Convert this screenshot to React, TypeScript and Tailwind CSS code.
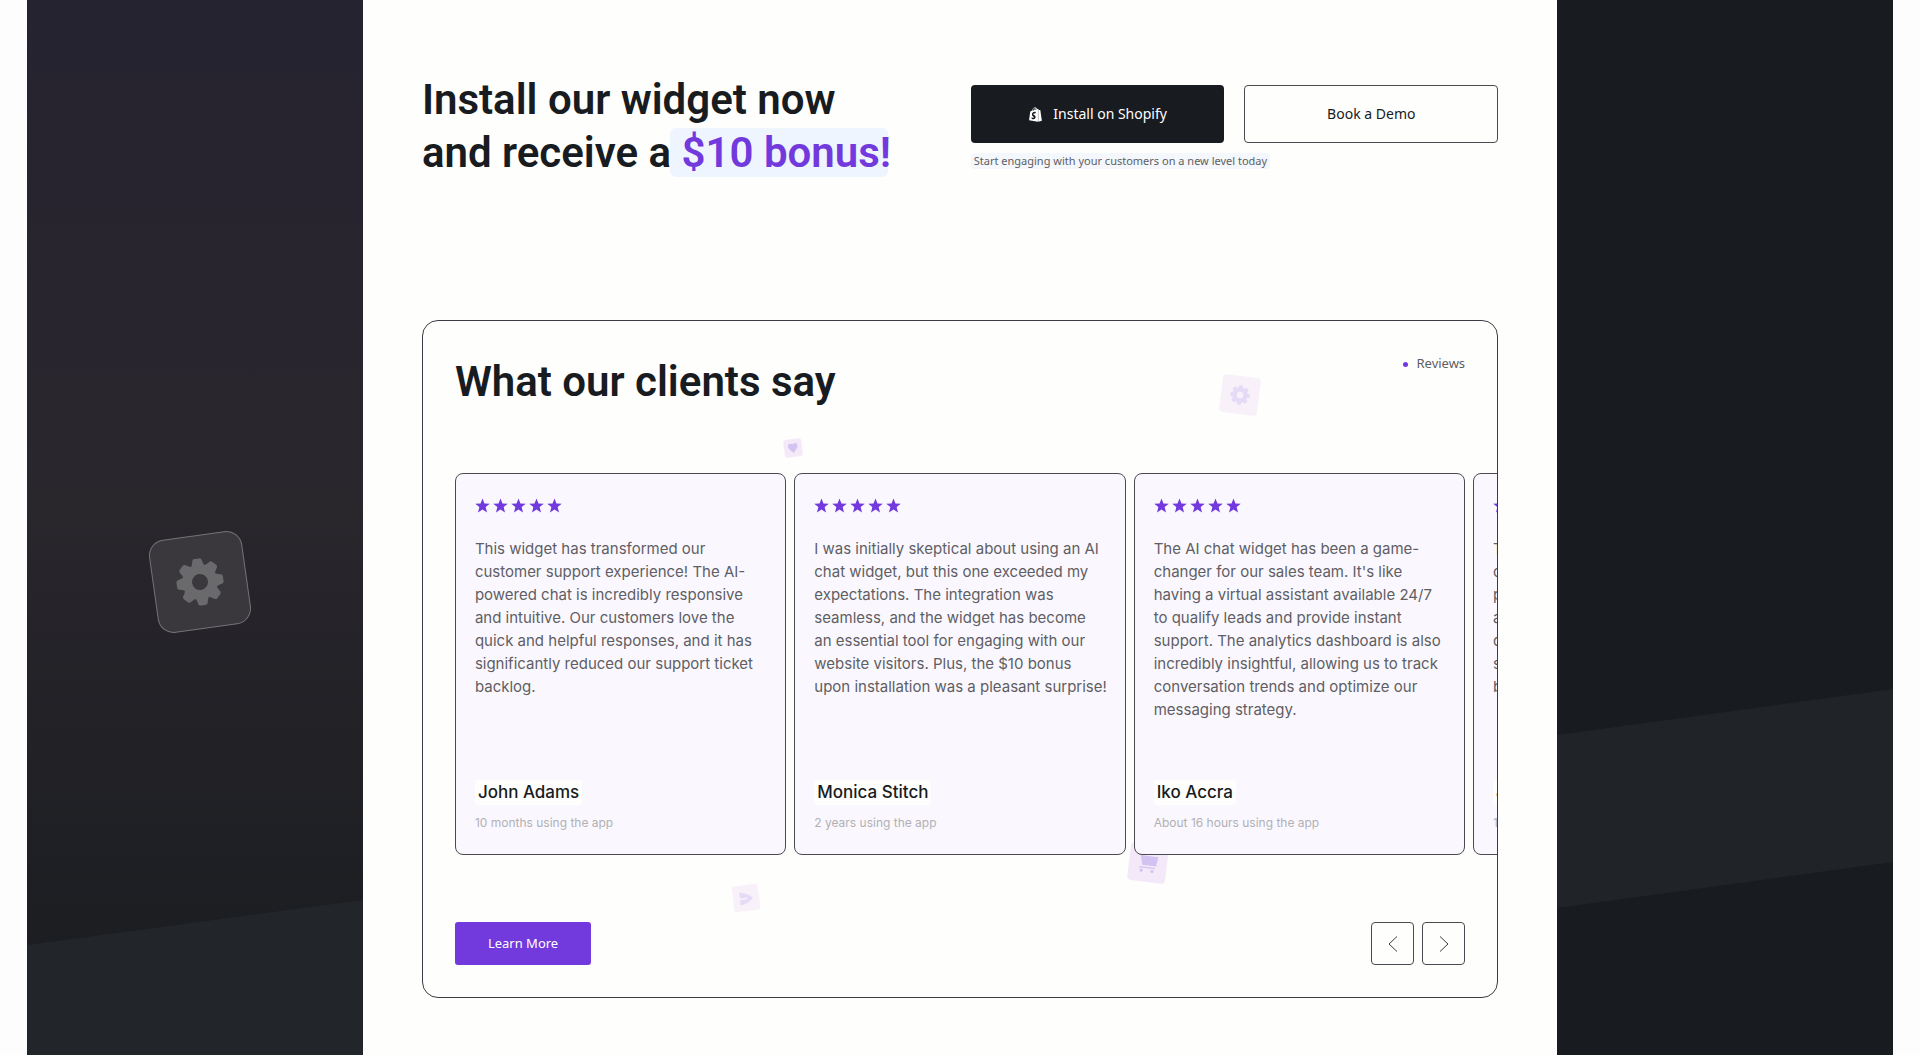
import { useRef } from "react";
import { FaShopify } from "react-icons/fa";

type Review = { lines: string[]; name: string; since: string };

const first: Review = {
  lines: [
    "This widget has transformed our",
    "customer support experience! The AI-",
    "powered chat is incredibly responsive",
    "and intuitive. Our customers love the",
    "quick and helpful responses, and it has",
    "significantly reduced our support ticket",
    "backlog.",
  ],
  name: "John Adams",
  since: "10 months using the app",
};

const reviews: Review[] = [
  first,
  {
    lines: [
      "I was initially skeptical about using an AI",
      "chat widget, but this one exceeded my",
      "expectations. The integration was",
      "seamless, and the widget has become",
      "an essential tool for engaging with our",
      "website visitors. Plus, the $10 bonus",
      "upon installation was a pleasant surprise!",
    ],
    name: "Monica Stitch",
    since: "2 years using the app",
  },
  {
    lines: [
      "The AI chat widget has been a game-",
      "changer for our sales team. It's like",
      "having a virtual assistant available 24/7",
      "to qualify leads and provide instant",
      "support. The analytics dashboard is also",
      "incredibly insightful, allowing us to track",
      "conversation trends and optimize our",
      "messaging strategy.",
    ],
    name: "Iko Accra",
    since: "About 16 hours using the app",
  },
  first,
];

function Gear({ className }: { className: string }) {
  return (
    <svg viewBox="-24 -24 48 48" className={className} fill="currentColor" aria-hidden="true">
      <path
        fillRule="evenodd"
        d="M-17 0A17 17 0 1 0 17 0A17 17 0 1 0 -17 0ZM-8 0A8 8 0 1 1 8 0A8 8 0 1 1 -8 0Z"
      />
      {[0, 45, 90, 135, 180, 225, 270, 315].map((a) => (
        <path
          key={a}
          transform={`rotate(${a})`}
          d="M-8 -14.500C-6 -16.500 -5.500 -18 -4.800 -21.500Q-4.400 -23.500 -2.500 -23.500H2.500Q4.400 -23.500 4.800 -21.500C5.500 -18 6 -16.500 8 -14.500Z"
        />
      ))}
    </svg>
  );
}

function Star() {
  return (
    <svg viewBox="0 0 20 20" className="size-[15px]" fill="currentColor" aria-hidden="true">
      <path d="M10 0.500L12.600 7.200L19.700 7.500L14.200 12L16 19.200L10 15.200L4 19.200L5.800 12L0.300 7.500L7.400 7.200Z" />
    </svg>
  );
}

function ReviewCard({ review }: { review: Review }) {
  return (
    <li className="flex shrink-0 basis-[calc((100%-16px)/3)] flex-col rounded-lg border border-[#4a4a50] bg-[#faf8fe] pt-6 pr-3 pb-[23px] pl-[19px]">
      <div role="img" aria-label="5 out of 5 stars" className="flex gap-[3px] text-[#7239dc]">
        <Star />
        <Star />
        <Star />
        <Star />
        <Star />
      </div>
      <p className="mt-6 min-h-[184px] text-[15px] leading-[23px] whitespace-pre-line text-[#5f5e64]">
        {review.lines.join("\n")}
      </p>
      <h3 className="mt-auto w-fit rounded-[3px] bg-[#fefefd] px-[3px] text-[17px] leading-[25px] font-medium text-[#181b20]">
        {review.name}
      </h3>
      <p className="mt-2.5 text-xs leading-4 text-[#b1b0b5]">{review.since}</p>
    </li>
  );
}

export default function App() {
  const track = useRef<HTMLUListElement>(null);
  const move = (dir: number) => track.current?.scrollBy({ left: dir * 339, behavior: "smooth" });

  return (
    <div className="grid min-h-screen grid-cols-[18fr_64fr_18fr] bg-[#fdfdfe] px-[27px] font-['Inter',sans-serif]">
      <aside className="relative overflow-hidden bg-[linear-gradient(to_bottom,#262331_0%,#29262c_48%,#1c1e22_88%,#191c20_100%)]">
        <div className="absolute inset-0 bg-[#222529] [clip-path:polygon(0_945px,100%_900px,100%_100%,0_100%)]" />
        <div className="absolute top-[535px] left-1/2 ml-[-42px] flex size-[94px] -rotate-[8deg] items-center justify-center rounded-2xl border border-[#747377] bg-[#3a383d] text-[#6a696c]">
          <Gear className="size-12" />
        </div>
      </aside>

      <main className="bg-[#fefefd] px-[59px] pt-[73px] pb-[57px]">
        <header className="flex justify-between">
          <h1 className="font-['Roboto',sans-serif] text-[42px] leading-[53px] font-semibold text-[#181b20]">
            Install our widget now
            <br />
            and receive a{" "}
            <span className="relative isolate text-[#7239dc]">
              <span className="absolute top-0 right-[3px] bottom-0 left-[-12px] -z-10 rounded-md bg-[#eef5fe]" />
              $10 bonus!
            </span>
          </h1>
          <div className="mt-3 w-[49%] font-['Noto_Sans',sans-serif]">
            <div className="grid grid-cols-2 gap-5">
              <button className="flex h-[58px] items-center justify-center gap-2.5 rounded bg-[#181b20] text-sm text-white">
                <FaShopify className="size-[15px]" />
                Install on Shopify
              </button>
              <button className="h-[58px] rounded border border-[#4a4a50] text-sm text-[#181b20]">Book a Demo</button>
            </div>
            <p className="mt-2.5 w-fit rounded-[3px] bg-[#f4f7fb] px-[3px] text-[11px] leading-4 text-[#5f5e64]">
              Start engaging with your customers on a new level today
            </p>
          </div>
        </header>

        <section className="relative isolate mt-[141px] overflow-hidden rounded-2xl border border-[#3c3d44] px-8 pt-[34px] pb-8">
          <div className="absolute top-[55px] left-[74.300%] -z-10 flex size-[38px] rotate-[7deg] items-center justify-center rounded-sm bg-[#f8f1fa] text-[#e5dbf7]">
            <Gear className="size-5" />
          </div>
          <div className="absolute top-[118px] left-[33.600%] -z-10 flex size-[18px] -rotate-[7deg] items-center justify-center rounded-[2px] bg-[#f4e9f8] text-[#d4c3f2]">
            <svg viewBox="0 0 20 20" className="w-2.5" fill="currentColor" aria-hidden="true">
              <path d="M10 20L2 11C-3 4 4 -3 10 2.500C16 -3 23 4 18 11Z" />
            </svg>
          </div>
          <div className="absolute top-[523px] left-[65.700%] -z-10 flex size-[38px] rotate-[7deg] items-center justify-center rounded-sm bg-[#f4e9f8] text-[#d4c3f2]">
            <svg viewBox="0 0 20 20" className="size-5" fill="currentColor" aria-hidden="true">
              <path d="M2 3H0V1H3.500L4 3H19.500L18.500 12.500H4.500ZM1.500 14H17.500V15.300H1.500Z" />
              <circle cx="4" cy="18" r="1.600" />
              <circle cx="15" cy="18" r="1.600" />
            </svg>
          </div>
          <div className="absolute top-[564px] left-[28.900%] -z-10 flex size-[26px] -rotate-[7deg] items-center justify-center rounded-[2px] bg-[#f8f1fa] text-[#e5dbf7]">
            <svg viewBox="0 0 14 13" className="w-3.5" fill="currentColor" aria-hidden="true">
              <path d="M0.500 0.500Q0.500 0 1 0Q9 1.500 13.500 6Q14 6.500 13.500 7Q9 11.500 1 13Q0.500 13 0.500 12.500L1.300 7.300H8V5.700H1.300Z" />
            </svg>
          </div>

          <div className="flex justify-between">
            <h2 className="font-['Roboto',sans-serif] text-[42px] leading-[53px] font-semibold text-[#181b20]">
              What our clients say
            </h2>
            <p className="flex h-[18px] items-center gap-2 font-['Noto_Sans',sans-serif] text-[13px] text-[#5f5e64]">
              <span className="size-[5px] rounded-full bg-[#7239dc]" />
              Reviews
            </p>
          </div>

          <ul ref={track} className="mt-[65px] flex h-[382px] gap-2">
            {reviews.map((r, i) => (
              <ReviewCard key={i} review={r} />
            ))}
          </ul>

          <div className="mt-[67px] flex items-center justify-between">
            <button className="h-[43px] rounded-[3px] bg-[#7239dc] px-[33px] font-['Noto_Sans',sans-serif] text-[13px] text-white">
              Learn More
            </button>
            <div className="flex gap-2">
              <button
                aria-label="Previous reviews"
                onClick={() => move(-1)}
                className="flex size-[43px] items-center justify-center rounded border border-[#4a4a50] text-[#3c3d44]"
              >
                <svg viewBox="0 0 10 16" className="h-4" fill="none" stroke="currentColor" aria-hidden="true">
                  <path d="M9 0.500L1 8L9 15.500" />
                </svg>
              </button>
              <button
                aria-label="Next reviews"
                onClick={() => move(1)}
                className="flex size-[43px] items-center justify-center rounded border border-[#4a4a50] text-[#3c3d44]"
              >
                <svg viewBox="0 0 10 16" className="h-4" fill="none" stroke="currentColor" aria-hidden="true">
                  <path d="M1 0.500L9 8L1 15.500" />
                </svg>
              </button>
            </div>
          </div>
        </section>
      </main>

      <aside className="relative overflow-hidden bg-[#181b1f]">
        <div className="absolute inset-0 bg-[#202327] [clip-path:polygon(0_735px,100%_689px,100%_862px,0_908px)]" />
      </aside>
    </div>
  );
}
